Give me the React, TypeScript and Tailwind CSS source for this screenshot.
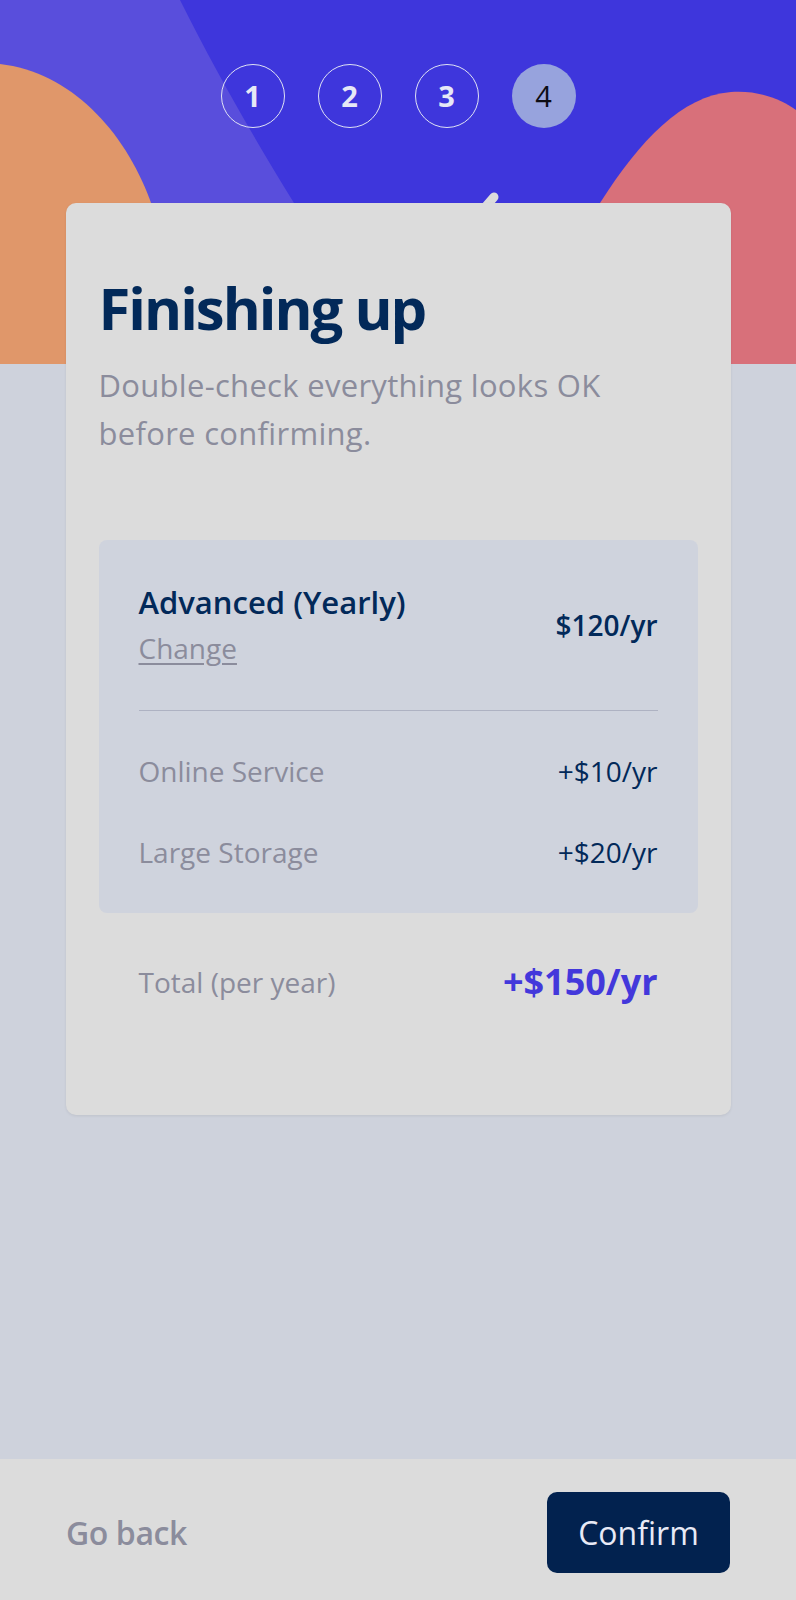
import React from "react";

const steps = [1, 2, 3, 4];

const addons = [
  { name: "Online Service", price: "+$10/yr" },
  { name: "Large Storage", price: "+$20/yr" },
];

function HeaderArt() {
  // decorative blobs behind the step indicator
  return (
    <svg
      className="absolute inset-0 h-full w-full"
      viewBox="0 0 796 364"
      preserveAspectRatio="none"
      aria-hidden="true"
    >
      <path d="M0 0 L180 0 C215 70 255 140 294 203 C330 260 360 310 392 364 L0 364 Z" fill="#594edc" />
      <path d="M0 64 C70 72 124 130 150 200 C166 245 176 300 182 364 L0 364 Z" fill="#e0976a" />
      <path d="M600 203 C640 140 682 96 731 92 C760 90 782 100 796 110 L796 364 L562 364 C572 300 585 240 600 203 Z" fill="#d8707a" />
      <line x1="481" y1="212" x2="494" y2="197" stroke="#dcdcdc" strokeWidth="9" strokeLinecap="round" />
    </svg>
  );
}

export default function App() {
  return (
    <div className="flex min-h-[1600px] w-full flex-col bg-[#ced2dc] font-['Open_Sans',sans-serif]">
      {/* Header with steps */}
      <header className="relative h-[364px] shrink-0 overflow-hidden bg-[#3e36dc]">
        <HeaderArt />
        <div className="relative flex justify-center gap-[33px] pt-16">
          {steps.map((n) =>
            n === 4 ? (
              <div
                key={n}
                className="flex h-16 w-16 items-center justify-center rounded-full bg-[#97a3dd] text-[29px] text-[#0c0c14]"
              >
                {n}
              </div>
            ) : (
              <div
                key={n}
                className="flex h-16 w-16 items-center justify-center rounded-full border-[1.5px] border-[#dfe2f4] text-[29px] font-bold text-[#e6e8f6]"
              >
                {n}
              </div>
            )
          )}
        </div>
      </header>

      {/* Card */}
      <main className="relative flex-1">
        <section className="relative mx-auto -mt-[161px] w-[665px] rounded-[10px] bg-[#dcdcdc] px-[33px] pt-[70px] pb-[111px] shadow-[0_1px_3px_rgba(0,0,0,0.08)]">
          <h1 className="text-[58px] leading-[70px] font-bold tracking-[-2px] text-[#022959]">Finishing up</h1>
          <p className="mt-[18px] max-w-[540px] text-[31px] leading-[48px] tracking-[0.3px] text-[#8b8c9c]">
            Double-check everything looks OK before confirming.
          </p>

          {/* Summary */}
          <div className="mt-[83px] rounded-lg bg-[#cfd3dd] px-10 pt-[44px] pb-[43px]">
            <div className="flex items-center justify-between">
              <div>
                <p className="text-[31px] leading-9 font-semibold text-[#022959]">Advanced (Yearly)</p>
                <a href="#" className="mt-[10px] block text-[28px] leading-9 text-[#8b8c9c] underline underline-offset-4">
                  Change
                </a>
              </div>
              <span className="text-[28px] leading-9 font-semibold text-[#022959]">$120/yr</span>
            </div>

            <div className="mt-[44px] h-px bg-[#aeb2c2]" />

            {addons.map((a, i) => (
              <div
                key={a.name}
                className={`flex items-center justify-between ${i === 0 ? "mt-[42px]" : "mt-[45px]"}`}
              >
                <span className="text-[28px] leading-9 text-[#8b8c9c]">{a.name}</span>
                <span className="text-[28px] leading-9 text-[#022959]">{a.price}</span>
              </div>
            ))}
          </div>

          <div className="mt-[47px] flex items-center justify-between px-10">
            <span className="text-[28px] leading-9 text-[#8b8c9c]">Total (per year)</span>
            <span className="text-[36px] leading-[44px] font-bold text-[#4338db]">+$150/yr</span>
          </div>
        </section>
      </main>

      {/* Footer nav */}
      <footer className="flex h-[141px] shrink-0 items-start justify-between bg-[#dcdcdc] px-[66px] pt-[33px]">
        <button className="flex h-[81px] items-center text-[32px] font-semibold tracking-[-0.4px] text-[#8b8c9c]">Go back</button>
        <button className="flex h-[81px] w-[183px] items-center justify-center rounded-[10px] bg-[#02224f] text-[32px] text-[#e8eaf6]">
          Confirm
        </button>
      </footer>
    </div>
  );
}
